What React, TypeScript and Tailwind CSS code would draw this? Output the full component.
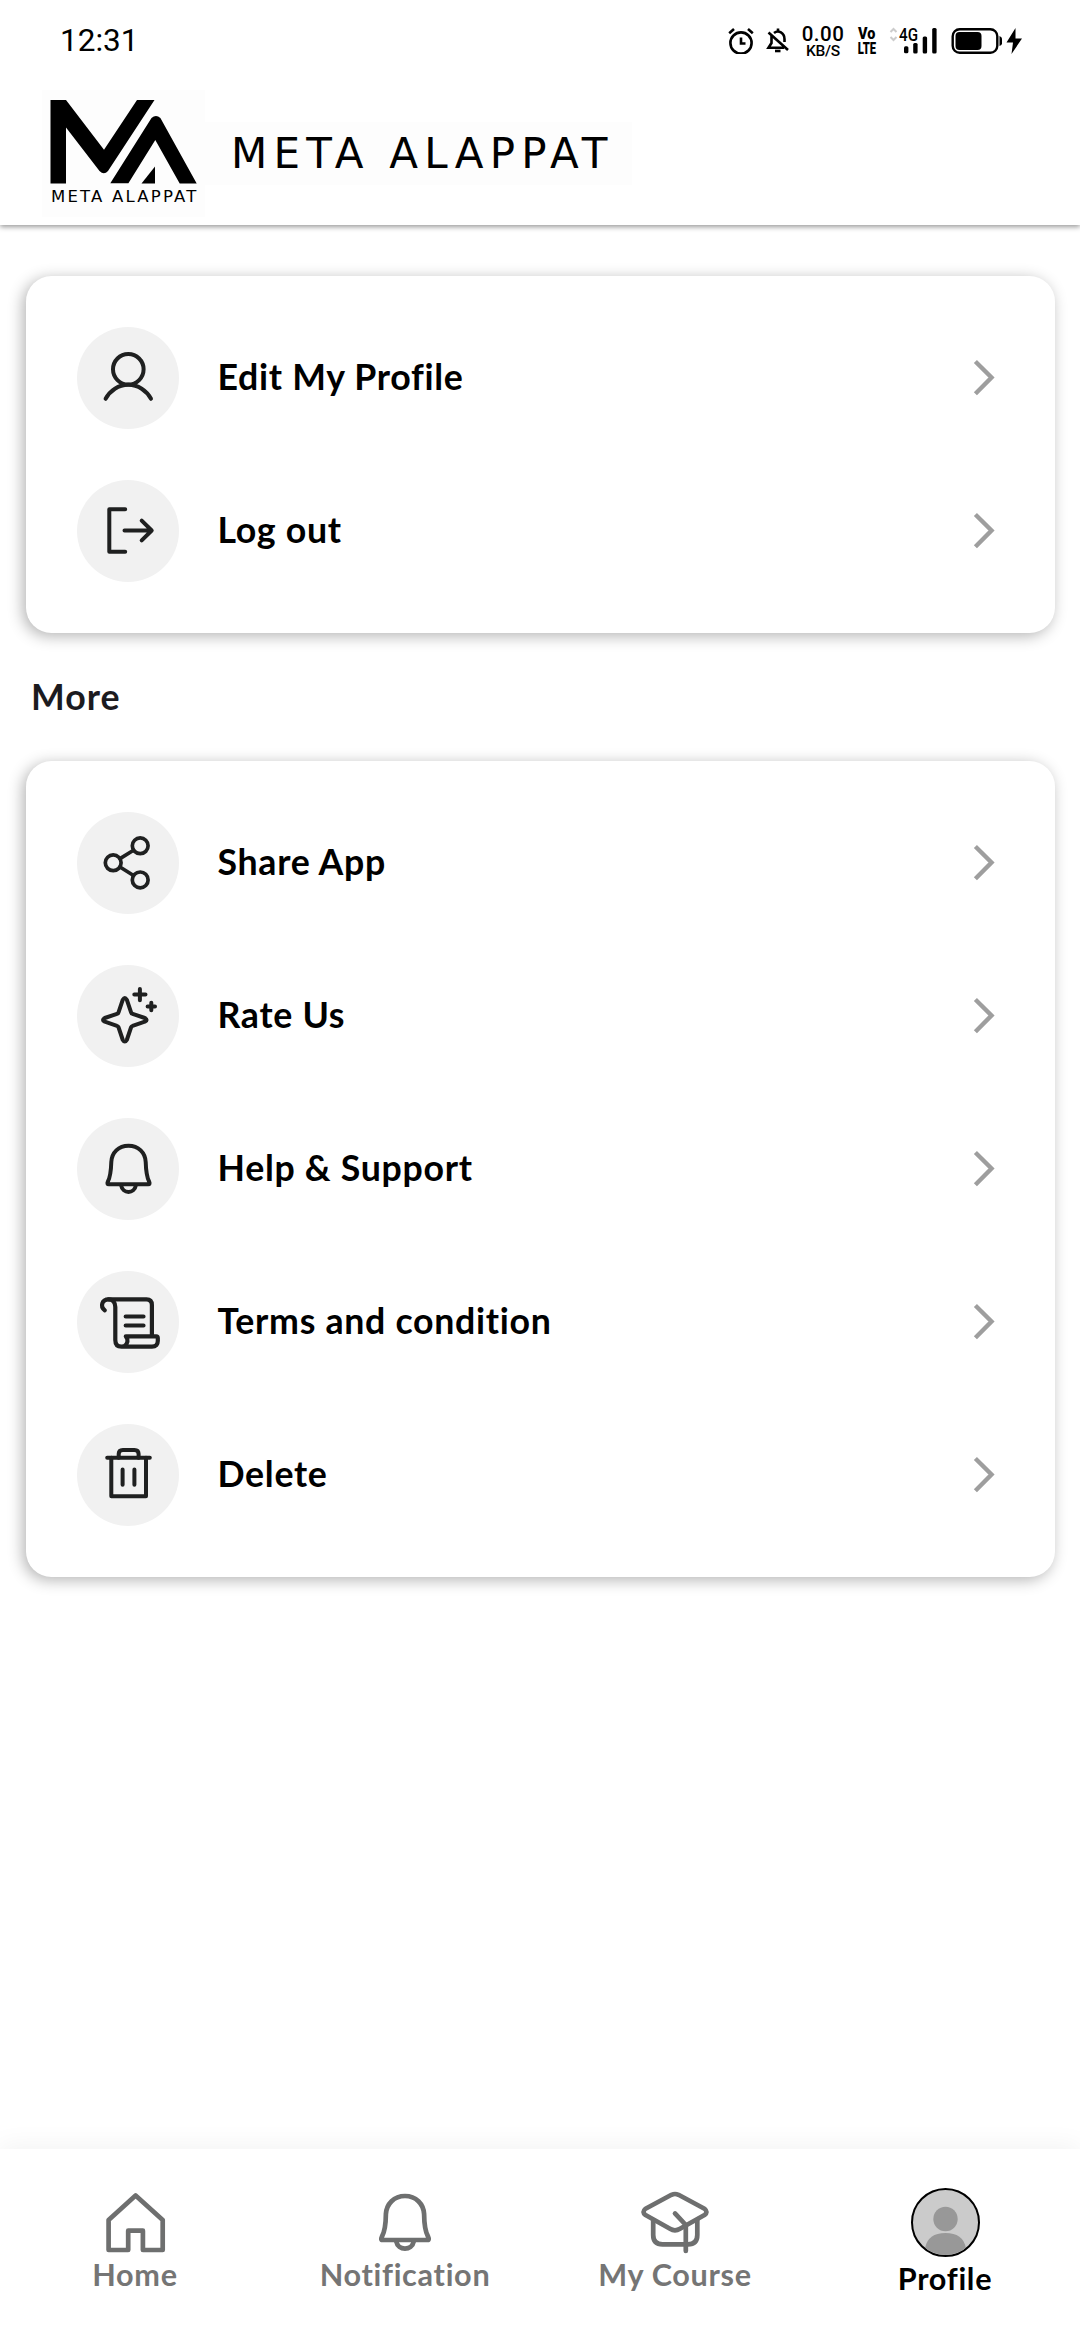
import type { ReactNode } from "react";

type Row = {
  label: string;
  icon: ReactNode;
};

const RowSvg = ({ children, width = 4 }: { children: ReactNode; width?: number }) => (
  <svg
    viewBox="0 0 102 102"
    className="h-[102px] w-[102px]"
    fill="none"
    stroke="#1f2020"
    strokeWidth={width}
    strokeLinecap="round"
    strokeLinejoin="round"
  >
    {children}
  </svg>
);

const accountRows: Row[] = [
  {
    label: "Edit My Profile",
    icon: (
      <RowSvg>
        <circle cx="51.3" cy="42.3" r="15.3" />
        <path d="M28.600 71.800C33 63.500 41.500 57.800 51.300 57.800S69.600 63.500 74 71.800" />
      </RowSvg>
    ),
  },
  {
    label: "Log out",
    icon: (
      <RowSvg>
        <path d="M48.200 29.300H32.300V71.700H48.200" />
        <path d="M47.500 50.500H74.500M64.700 40.600L74.700 50.500L64.700 60.400" />
      </RowSvg>
    ),
  },
];

const moreRows: Row[] = [
  {
    label: "Share App",
    icon: (
      <RowSvg width={3.7}>
        <circle cx="36.200" cy="50.800" r="7.900" />
        <circle cx="63.200" cy="33.800" r="7.900" />
        <circle cx="63.200" cy="67.900" r="7.900" />
        <path d="M43 46.600L56.500 38.200M43 55L56.500 63.500" />
      </RowSvg>
    ),
  },
  {
    label: "Rate Us",
    icon: (
      <RowSvg>
        <path d="M45.800 34.700Q47.800 31.500 49.800 34.700L54 47.200Q54.300 48.500 55.600 48.800L67.800 53Q71.400 54.900 67.800 56.700L55.600 60.800Q54.300 61.200 54 62.500L49.800 75Q47.800 78.200 45.800 75L41.600 62.500Q41.300 61.200 40 60.800L27.800 56.700Q24.200 54.900 27.800 53L40 48.800Q41.300 48.500 41.600 47.200Z" />
        <path d="M62.900 24V35.300M57.300 29.600H68.500M74.300 37.800V45.200M70.600 41.500H78" />
      </RowSvg>
    ),
  },
  {
    label: "Help & Support",
    icon: (
      <RowSvg>
        <path d="M51.500 27.700C41.500 27.700 34.700 34.800 34.300 44C34 54 33.600 58.500 30.800 63.800Q29.700 66.300 31.800 66.300H71.200Q73.300 66.300 72.200 63.800C69.400 58.500 69 54 68.700 44C68.300 34.800 61.500 27.700 51.500 27.700Z" />
        <path d="M44.200 67.500C45.500 76 57.500 76 58.800 67.500" />
      </RowSvg>
    ),
  },
  {
    label: "Terms and condition",
    icon: (
      <RowSvg width={4.2}>
        <path d="M27.800 39.300C22.800 35.500 25 28.300 31.500 28.300H69.500C73 28.300 74.900 30.500 74.900 34V65" />
        <path d="M31.500 28.300C36.500 28.300 38.300 32 38.300 36V69C38.300 73.500 40.500 75.700 44.500 75.700H75C79 75.700 80.800 73 80.800 70V67Q80.800 65.300 79.200 65.300H48.800L50.300 68C51.200 71.500 49 75.700 44.500 75.700" />
        <path d="M48.700 45.500H66.500M48.700 54.500H66.500" />
      </RowSvg>
    ),
  },
  {
    label: "Delete",
    icon: (
      <RowSvg>
        <path d="M30.200 33.800H72.800" />
        <path d="M41.700 33.800V30Q41.700 25.900 45.800 25.900H57.500Q61.600 25.900 61.600 30V33.800" />
        <path d="M34.300 33.800V72.300H69V33.800" />
        <path d="M45.600 45.500V60.800M57.400 45.500V60.800" />
      </RowSvg>
    ),
  },
];

const NavSvg = ({ children }: { children: ReactNode }) => (
  <svg
    viewBox="0 0 72 72"
    className="h-[72px] w-[72px]"
    fill="none"
    stroke="#6e6f6f"
    strokeWidth="4.700"
    strokeLinecap="round"
    strokeLinejoin="round"
  >
    {children}
  </svg>
);

const navItems: Row[] = [
  {
    label: "Home",
    icon: (
      <NavSvg>
        <path d="M36.600 8.500L63.700 33V63H43.900V43.700H29.200V63H9.600V33Z" />
      </NavSvg>
    ),
  },
  {
    label: "Notification",
    icon: (
      <NavSvg>
        <path d="M36 9C25 9 17.500 17 16.900 27C16.800 38 16 44 13 49.500Q11.400 53 13.500 53H58.500Q60.600 53 59 49.500C56 44 55.200 38 55.100 27C54.500 17 47 9 36 9Z" />
        <path d="M27.300 54.500C29 64 43 64 44.700 54.500" />
      </NavSvg>
    ),
  },
  {
    label: "My Course",
    icon: (
      <NavSvg>
        <path d="M32.500 7.800Q36 6.200 39.500 7.800L65.500 21.800Q69.500 25.200 65.500 28L41 41.800Q36 44.800 31 41.800L6.500 28Q2.500 25.200 6.500 21.800Z" />
        <path d="M14.200 33V48Q14.200 57.300 23.500 57.300H49Q58.300 57.300 58.300 48V33" />
        <path d="M36 26.400L46.800 38V64" />
      </NavSvg>
    ),
  },
];

const StatusBar = () => (
  <div className="flex h-[82px] items-start justify-between">
    <span className="ml-[60px] mt-[22px] font-[Roboto] text-[31.500px] leading-[37px]">12:31</span>
    <div className="mr-[57px] mt-[26px] flex h-[30px] items-start">
      <svg width="26" height="28" viewBox="0 0 26 28" fill="none" stroke="#000" strokeWidth="2.600">
        <circle cx="13" cy="17" r="10.600" />
        <path d="M13 11.500V17.500H17.500M1.200 7.200L6 3M24.800 7.200L20 3" />
      </svg>
      <svg className="ml-[12px]" width="24" height="28" viewBox="0 0 24 28" fill="none" stroke="#000" strokeWidth="2.600">
        <path d="M8 7C12.500 3.500 18.500 7 18.500 13V16M5.500 9.500V17L2.500 21.700H18M12 5V2.500M2.500 6.500L22 24" />
        <path d="M9 25H14.500" />
      </svg>
      <div className="ml-[11px] flex w-[44px] flex-col items-center font-[Roboto] font-medium">
        <span className="text-[20.500px] leading-[16px] tracking-[0.5px]">0.00</span>
        <span className="text-[15.500px] leading-[18px] tracking-[-0.3px]">KB/S</span>
      </div>
      <div className="ml-[10px] flex w-[24px] flex-col items-center font-[Roboto] font-black">
        <span className="scale-x-[0.9] text-[16px] leading-[15px]">Vo</span>
        <span className="scale-x-[0.66] text-[17px] leading-[14px]">LTE</span>
      </div>
      <svg className="ml-[10px] overflow-visible" width="50" height="28" viewBox="0 0 50 28">
        <path d="M1.500 6L4.500 3L7.500 6M1.500 11L4.500 14L7.500 11" fill="none" stroke="#ccc" strokeWidth="2" />
        <text x="10" y="14.500" fontFamily="Roboto" fontWeight="500" fontSize="17.500" textLength="19" lengthAdjust="spacingAndGlyphs">
          4G
        </text>
        <rect x="15" y="20.300" width="4.400" height="7" rx="1.500" />
        <rect x="24.200" y="17" width="4.400" height="10.500" rx="1.500" />
        <rect x="33.700" y="10.500" width="4.400" height="17" rx="1.500" />
        <rect x="43.200" y="2" width="4.400" height="25.500" rx="1.500" />
      </svg>
      <svg className="ml-[12px]" width="72" height="30" viewBox="0 0 72 30">
        <rect x="1.700" y="3.200" width="44.600" height="23.600" rx="7" fill="none" stroke="#000" strokeWidth="2.400" />
        <rect x="4.500" y="6" width="26" height="18" rx="4" />
        <path d="M48.500 10Q51 11 51 12.500V17.500Q51 19 48.500 20Z" />
        <path d="M64.500 2L55.500 16.500H62L60.500 28L71 12.500H64.500Z" />
      </svg>
    </div>
  </div>
);

const Header = () => (
  <header className="relative z-10 h-[225px] bg-white shadow-[0_2px_5px_rgba(0,0,0,0.4)]">
    <StatusBar />
    <div className="flex pl-[42px] pt-[8px]">
      <div className="flex h-[127px] w-[163px] flex-col bg-[#fdfdfd] pl-[8px] pt-[10px]">
        <svg width="147" height="84" viewBox="50 100 147 84">
          <path d="M50.500 100H66L104 149.800L137 100H154.500L108 171Q104 175.500 99.500 171L66 127.500V183.500H50.500Z" />
          <path d="M110.300 183.300L151.500 118Q156 114 160.400 118L196.700 183.500H179.700L155.300 140L128.400 183.300Z" />
          <path d="M141.500 183.500L155 166.500V183.500Z" />
        </svg>
        <span className="ml-px mt-[3px] whitespace-nowrap font-['DejaVu_Sans'] text-[16.500px] leading-[20px] tracking-[2.200px]">
          META ALAPPAT
        </span>
      </div>
      <div className="mt-[32px] h-[63px] w-[427px] bg-[#fdfdfd] pl-[26px]">
        <span className="whitespace-nowrap font-['DejaVu_Sans'] text-[42px] leading-[64px] tracking-[6.200px]">
          META ALAPPAT
        </span>
      </div>
    </div>
  </header>
);

const Card = ({ rows }: { rows: Row[] }) => (
  <div className="mx-[25.500px] flex flex-col gap-[51px] rounded-[25.500px] bg-white py-[51px] pl-[51px] pr-[60px] shadow-[-3px_3px_15px_rgba(0,0,0,0.3)]">
    {rows.map((row) => (
      <div key={row.label} className="flex h-[102px] items-center">
        <div className="h-[102px] w-[102px] rounded-full bg-[#f1f1f1]">{row.icon}</div>
        <span className="ml-[39px] flex-1 pb-[3px] text-[35.700px] font-bold leading-[44px] tracking-[0.700px] text-black">
          {row.label}
        </span>
        <svg width="24" height="40" viewBox="0 0 24 40" fill="none" stroke="#9e9e9e" strokeWidth="4.400">
          <path d="M4.400 3.500L20.500 19.500L4.400 35.700" />
        </svg>
      </div>
    ))}
  </div>
);

const BottomNav = () => (
  <nav className="grid h-[191px] grid-cols-4 bg-white shadow-[0_-4px_24px_rgba(0,0,0,0.05)]">
    {navItems.map((item) => (
      <div key={item.label} className="flex flex-col items-center pt-[38px]">
        {item.icon}
        <span className="-mt-[3px] text-[30.600px] font-bold leading-[38px] tracking-[0.700px] text-[#757575]">
          {item.label}
        </span>
      </div>
    ))}
    <div className="flex flex-col items-center pt-[39px]">
      <div className="h-[69px] w-[69px] overflow-hidden rounded-full border-[2.500px] border-black bg-[#cbcbcb]">
        <svg viewBox="2 2 65 65" fill="#989898" className="h-full w-full">
          <circle cx="34.500" cy="31" r="12.200" />
          <path d="M14 60Q17 45 34.500 45T55 60V70H14Z" />
        </svg>
      </div>
      <span className="mt-[3px] text-[30.600px] font-bold leading-[38px] tracking-[0.700px] text-black">Profile</span>
    </div>
  </nav>
);

const App = () => {
  return (
    <div className="flex h-[2340px] w-[1080px] flex-col overflow-hidden bg-white font-[Lato,sans-serif] text-black">
      <Header />
      <main className="flex-1 pt-[51px]">
        <Card rows={accountRows} />
        <h2 className="mb-[42px] ml-[31px] mt-[42px] text-[35.700px] font-bold leading-[44px] tracking-[1px] text-[#1c1b1f]">
          More
        </h2>
        <Card rows={moreRows} />
      </main>
      <BottomNav />
    </div>
  );
};

export default App;
